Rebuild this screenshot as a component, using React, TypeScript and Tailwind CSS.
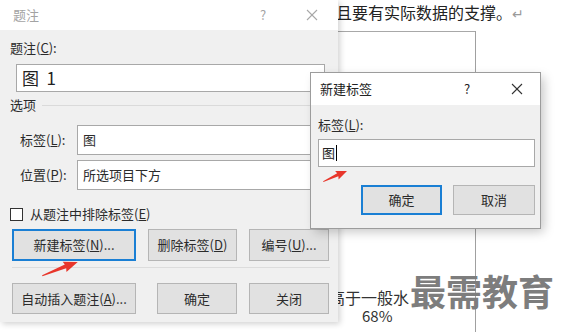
import React from "react";

const FONT = { fontFamily: '"Noto Sans CJK SC", "Noto Sans", sans-serif' };

function XIcon({ color }: { color: string }) {
  return (
    <svg width="12" height="12" viewBox="0 0 12 12">
      <line x1="1" y1="1" x2="11" y2="11" stroke={color} strokeWidth="1.1" />
      <line x1="11" y1="1" x2="1" y2="11" stroke={color} strokeWidth="1.1" />
    </svg>
  );
}

function Btn({
  w,
  focused,
  children,
}: {
  w: string;
  focused?: boolean;
  children: React.ReactNode;
}) {
  return (
    <div
      className={
        "h-full flex items-center justify-center text-[13px] text-[#2b2b2b] bg-[#e1e1e1] " +
        w +
        (focused ? " border-2 border-[#1a7fd4]" : " border border-[#b5b5b5]")
      }
    >
      {children}
    </div>
  );
}

export default function App() {
  return (
    <div className="relative w-[561px] h-[332px] bg-white overflow-hidden" style={FONT}>
      {/* document behind */}
      <div className="absolute left-[320px] top-0 text-[16px] leading-[24px] text-[#222] whitespace-nowrap">
        并且要有实际数据的支撑。<span className="text-[#9a9a9a] text-[14px]">↵</span>
      </div>
      <div className="absolute left-[338px] top-[31px] w-[138px] h-px bg-[#a8a8a8]" />
      <div className="absolute left-[475px] top-[31px] w-px h-[301px] bg-[#a0a0a0]" />
      <div className="absolute left-[329px] top-[289px] text-[16px] leading-[16px] text-[#333] whitespace-nowrap">
        高于一般水
      </div>
      <div className="absolute left-[362px] top-[308px] text-[15px] leading-[16px] text-[#333]">68%</div>

      {/* main dialog */}
      <div className="absolute left-0 top-0 w-[338px] h-[322px] flex flex-col shadow-[2px_2px_6px_rgba(0,0,0,0.18)]">
        <div className="h-[30px] bg-white flex items-center pl-[13px] text-[13px] text-[#a3a3a3]">
          <span>题注</span>
          <span className="ml-auto w-[20px] text-center text-[13px]">?</span>
          <span className="ml-[29px] mr-[16px] w-[20px] flex justify-center">
            <XIcon color="#a8a8a8" />
          </span>
        </div>
        <div className="flex-1 bg-[#f0f0f0] pl-[10px] pt-[10px] flex flex-col text-[13px] text-[#2b2b2b]">
          <div className="h-[16px] leading-[16px]">
            题注(<span className="underline">C</span>):
          </div>
          <div className="mt-[8px] ml-[6px] w-[309px] h-[28px] bg-white border border-[#a8a8a8] flex items-center pl-[5px] text-[17px] text-[#222]">
            图&nbsp;&nbsp;1
          </div>
          <div className="mt-[5px] h-[16px] flex items-center">
            <span className="leading-[16px]">选项</span>
            <div className="ml-[6px] mr-[8px] flex-1 h-px bg-[#dadada]" />
          </div>
          <div className="mt-[12px] h-[30px] flex items-center pl-[10px]">
            <span className="w-[57px]">
              标签(<span className="underline">L</span>):
            </span>
            <div className="w-[248px] h-full bg-white border border-[#a8a8a8] flex items-center pl-[5px]">图</div>
          </div>
          <div className="mt-[5px] h-[30px] flex items-center pl-[10px]">
            <span className="w-[57px]">
              位置(<span className="underline">P</span>):
            </span>
            <div className="w-[248px] h-full bg-white border border-[#a8a8a8] flex items-center pl-[5px]">所选项目下方</div>
          </div>
          <div className="mt-[17px] h-[14px] flex items-center">
            <div className="w-[13px] h-[13px] border border-[#333] bg-white" />
            <span className="ml-[7px]">
              从题注中排除标签(<span className="underline">E</span>)
            </span>
          </div>
          <div className="mt-[8px] ml-[2px] h-[32px] flex gap-[12px]">
            <Btn w="w-[124px]" focused>
              新建标签(<span className="underline">N</span>)...
            </Btn>
            <Btn w="w-[89px]">
              删除标签(<span className="underline">D</span>)
            </Btn>
            <Btn w="w-[80px]">
              编号(<span className="underline">U</span>)...
            </Btn>
          </div>
          <div className="mt-[6px] ml-[2px] w-[318px] h-px bg-[#dcdcdc]" />
          <div className="mt-[15px] ml-[2px] h-[31px] flex">
            <Btn w="w-[124px]">
              自动插入题注(<span className="underline">A</span>)...
            </Btn>
            <div className="ml-[21px] h-full flex gap-[12px]">
              <Btn w="w-[80px]">确定</Btn>
              <Btn w="w-[80px]">关闭</Btn>
            </div>
          </div>
        </div>
      </div>

      {/* new label dialog */}
      <div className="absolute left-[311px] top-[73px] w-[229px] h-[155px] flex flex-col shadow-[0_0_0_1px_#9c9c9c,4px_4px_10px_rgba(0,0,0,0.22)]">
        <div className="h-[32px] bg-white flex items-center pl-[9px] text-[13px] text-[#222]">
          <span>新建标签</span>
          <span className="ml-auto w-[20px] text-center">?</span>
          <span className="ml-[30px] mr-[13px] w-[20px] flex justify-center">
            <XIcon color="#333" />
          </span>
        </div>
        <div className="flex-1 bg-[#f0f0f0] pl-[7px] pt-[12px] flex flex-col text-[13px] text-[#2b2b2b]">
          <div className="h-[16px] leading-[16px]">
            标签(<span className="underline">L</span>):
          </div>
          <div className="mt-[6px] w-[217px] h-[28px] bg-white border border-[#a8a8a8] flex items-center pl-[3px] text-[#222]">
            图<span className="inline-block w-px h-[16px] bg-black ml-px" />
          </div>
          <div className="mt-[18px] ml-[43px] h-[30px] flex gap-[11px]">
            <Btn w="w-[81px]" focused>
              确定
            </Btn>
            <Btn w="w-[82px]">取消</Btn>
          </div>
        </div>
      </div>

      {/* watermark */}
      <div className="absolute left-[410px] top-[271px] text-[36px] leading-[38px] font-bold text-[#7d7d7d] whitespace-nowrap">
        最需教育
      </div>

      {/* red arrows */}
      <svg className="absolute left-0 top-0 pointer-events-none" width="561" height="332">
        <g transform="translate(42 275) rotate(-19.9)">
          <polygon points="0,0.3 25,-2 24,-5.5 38,0 24,5.5 25,2 0,1.2" fill="#e8362b" />
        </g>
        <g transform="translate(323 181) rotate(-22.6)">
          <polygon points="0,0.3 16,-1.6 15,-4.5 26,0 15,4.5 16,1.6 0,1.1" fill="#e8362b" />
        </g>
      </svg>
    </div>
  );
}
